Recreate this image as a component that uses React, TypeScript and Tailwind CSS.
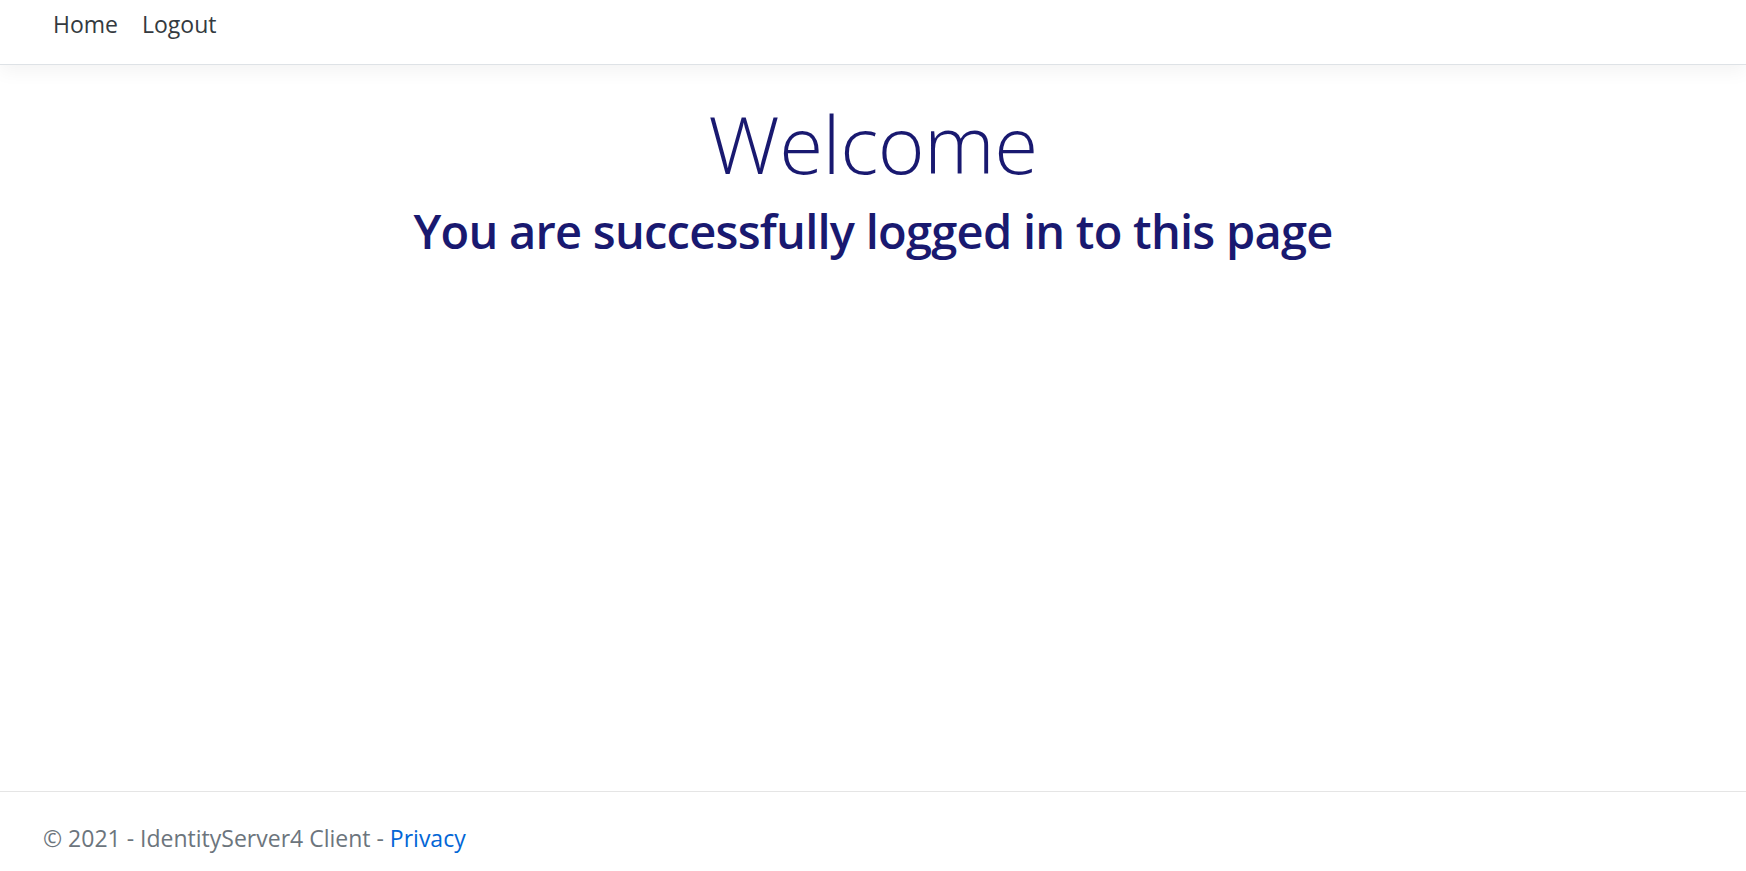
const font = { fontFamily: '"Open Sans", "Noto Sans", sans-serif' };

const App = () => {
  return (
    <div className="flex h-[871px] flex-col bg-white" style={font}>
      <header className="relative z-10 h-[65px] border-b border-[#dee2e6] bg-white shadow-[0_6px_18px_rgba(0,0,0,0.05)]">
        <nav className="flex items-start gap-[24px] pl-[53px] pt-[6px] text-[23px] leading-[36px] text-[#343a40]">
          <a href="#">Home</a>
          <a href="#">Logout</a>
        </nav>
      </header>

      <main className="flex-1 text-center text-[#191970]">
        <h1 className="mt-[28px] text-[80px] font-light leading-[100px] tracking-[-0.5px]">
          Welcome
        </h1>
        <h2 className="mt-[8px] text-[47px] font-semibold leading-[60px] tracking-[-0.75px]">
          You are successfully logged in to this page
        </h2>
      </main>

      <footer className="h-[80px] border-t border-[#e5e5e5] pl-[43px] text-[23px] leading-[92px] text-[#6c757d]">
        © 2021 - IdentityServer4 Client -{" "}
        <a href="#" className="text-[#0366d6]">
          Privacy
        </a>
      </footer>
    </div>
  );
};

export default App;
